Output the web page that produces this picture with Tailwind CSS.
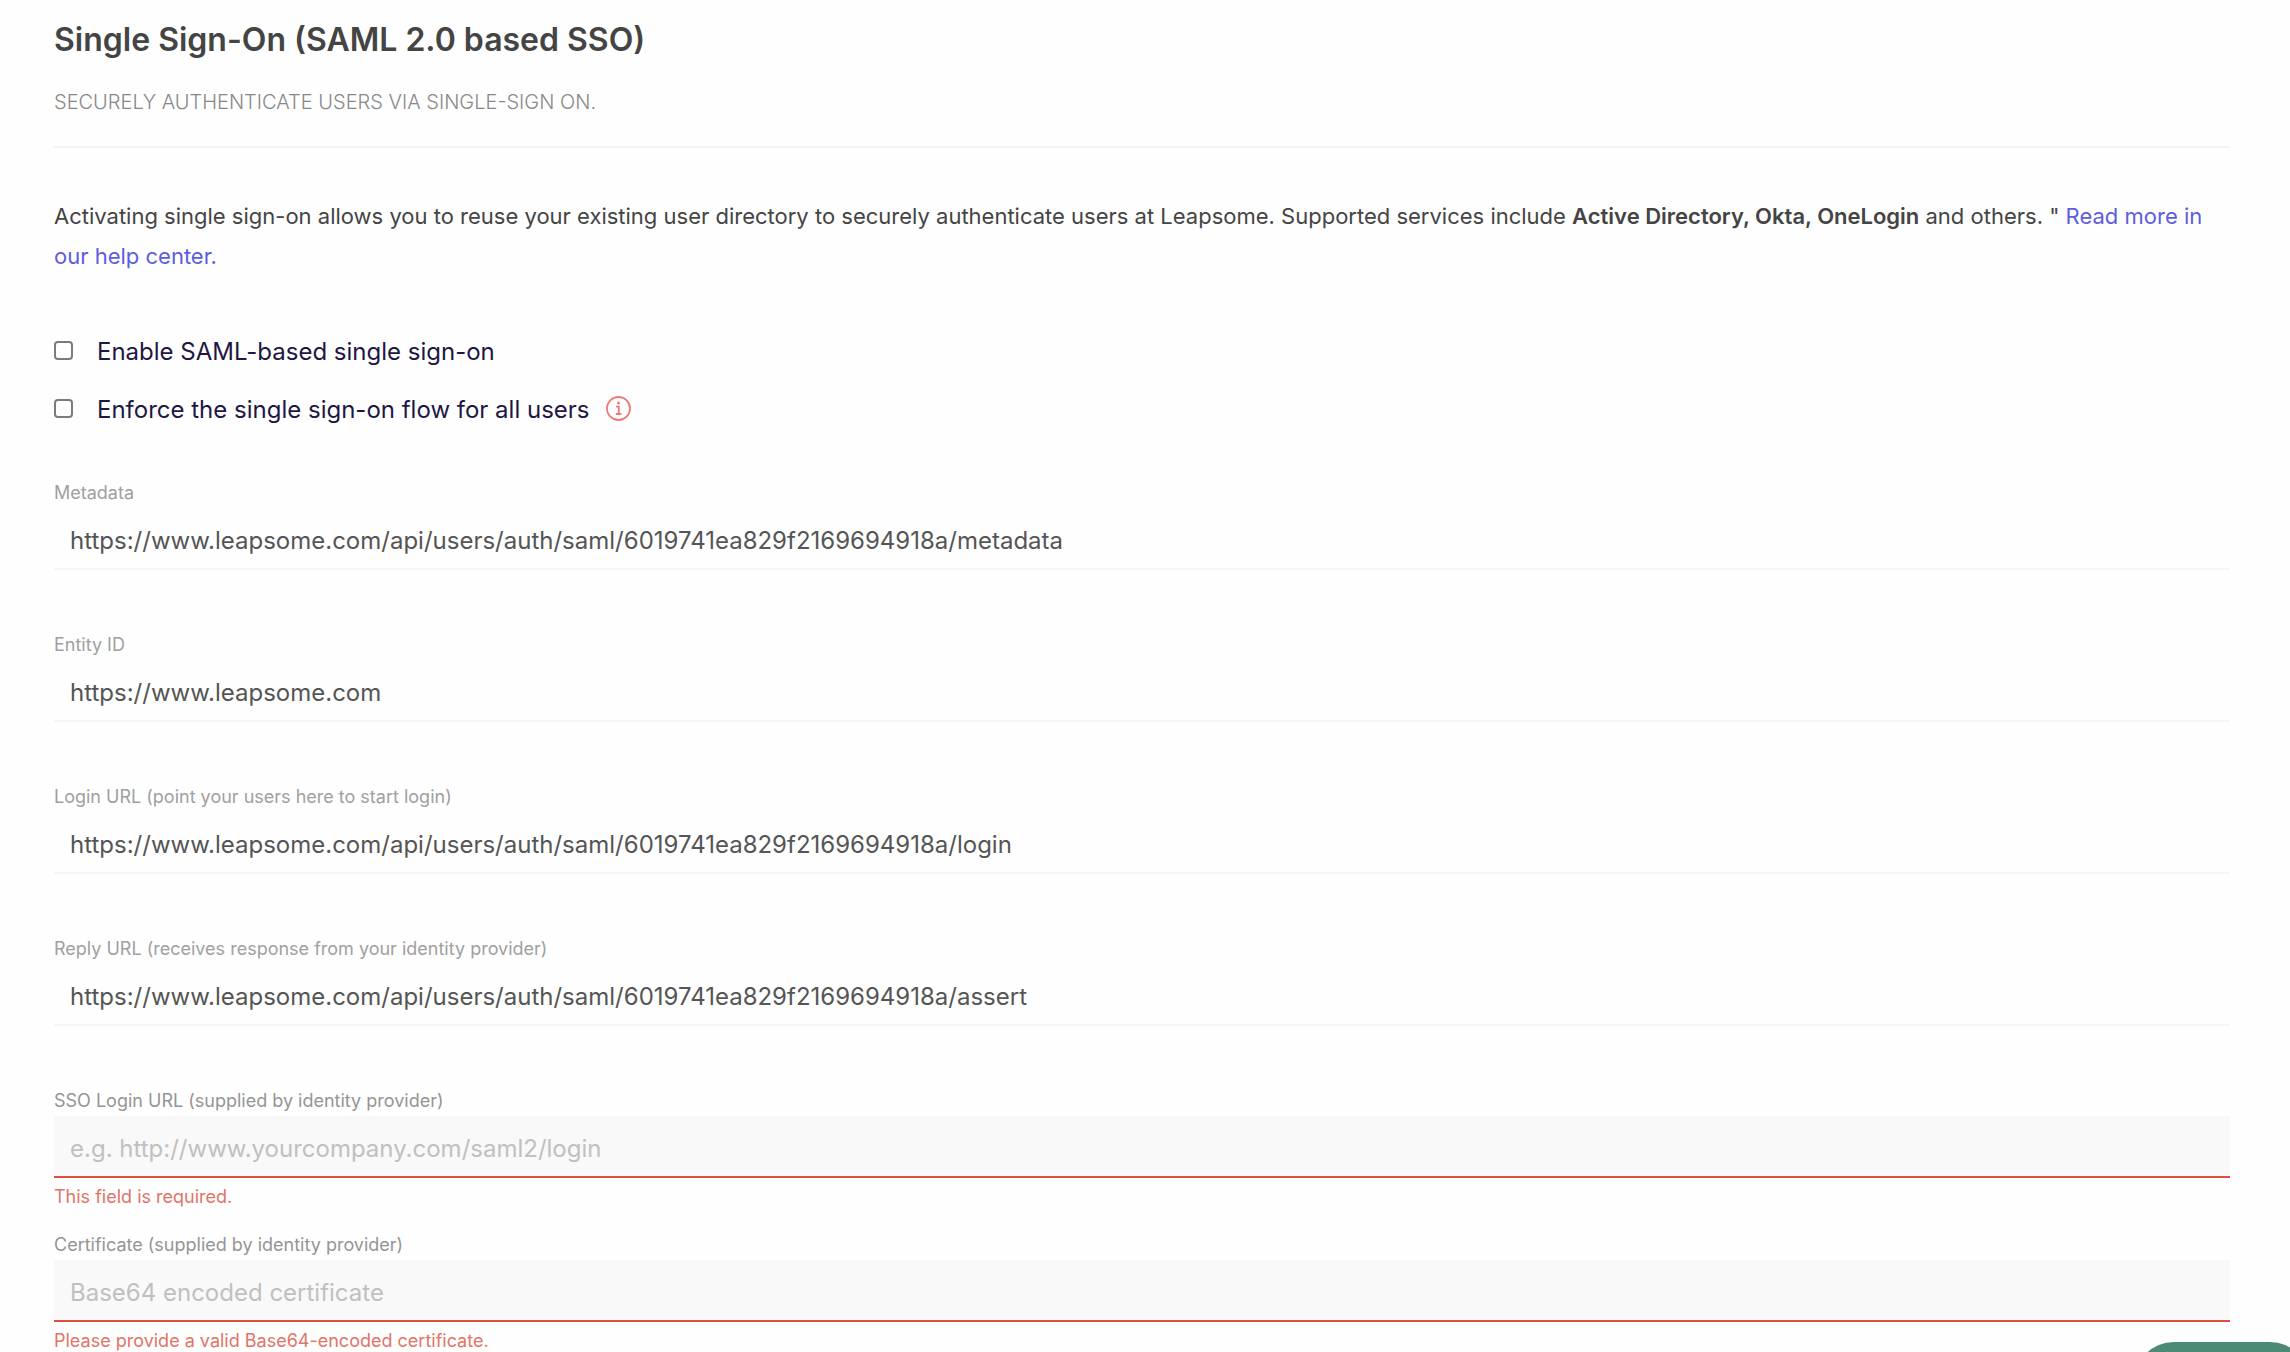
<!DOCTYPE html>
<html lang="en">
<head>
    <meta charset="UTF-8">
    <meta name="viewport" content="width=device-width, initial-scale=1.0">
    <script src="https://cdn.jsdelivr.net/npm/@tailwindcss/browser@4"></script>
    <title>Single Sign-On</title>
</head>
<body class="bg-[#fefefe] font-['Inter',sans-serif] text-[#444444]">
    <main class="pl-[54px] pr-[60px] pt-5">
        <header class="border-b-2 border-[#f3f3f3] pb-[30px]">
            <h1 class="text-[32px] leading-[40px] font-semibold">Single Sign-On (SAML 2.0 based SSO)</h1>
            <p class="mt-7 text-[20px] leading-[28px] font-light text-[#888888] uppercase">Securely authenticate users via single-sign on.</p>
        </header>

        <p class="mt-12 text-[22px] leading-[40px]">
            Activating single sign-on allows you to reuse your existing user directory to securely authenticate users at Leapsome. Supported services include <b class="font-semibold">Active Directory, Okta, OneLogin</b> and others. " <a href="#" class="text-[#5d5de0]">Read more in our help center.</a>
        </p>

        <form>
            <div class="mt-[58px] flex flex-col gap-[26px] text-[24px] leading-[28px] text-[#1e1743]">
                <div class="flex items-center">
                    <input type="checkbox" id="enable" class="size-[19px] appearance-none rounded-[4px] border-2 border-[#7b7b7b] bg-white checked:bg-[#5d5de0]">
                    <label for="enable" class="pl-6 pt-1">Enable SAML-based single sign-on</label>
                </div>
                <div class="flex items-center">
                    <input type="checkbox" id="enforce" class="size-[19px] appearance-none rounded-[4px] border-2 border-[#7b7b7b] bg-white checked:bg-[#5d5de0]">
                    <label for="enforce" class="pl-6 pt-1">Enforce the single sign-on flow for all users</label>
                    <svg class="ml-4 size-[25px]" viewBox="0 0 25 25" fill="none" stroke="#ec7b78">
                        <circle cx="12.5" cy="12.5" r="11.5" stroke-width="1.8"/>
                        <circle cx="12.5" cy="7" r="1.5" fill="#ec7b78" stroke="none"/>
                        <path d="M10 10.7h2.8v7.2M9.8 18h5.6" stroke-width="1.8"/>
                    </svg>
                </div>
            </div>

            <div class="mt-[50px] flex flex-col gap-14">
                <div>
                    <label for="metadata" class="block pt-1 text-[18px] leading-[30px] text-[#a0a0a0]">Metadata</label>
                    <input type="text" id="metadata" readonly value="https://www.leapsome.com/api/users/auth/saml/6019741ea829f2169694918a/metadata" class="block h-[62px] w-full border-b-2 border-[#f7f7f7] px-4 pt-1 text-[24px] text-[#555555]">
                </div>
                <div>
                    <label for="entity" class="block pt-1 text-[18px] leading-[30px] text-[#a0a0a0]">Entity ID</label>
                    <input type="text" id="entity" readonly value="https://www.leapsome.com" class="block h-[62px] w-full border-b-2 border-[#f7f7f7] px-4 pt-1 text-[24px] text-[#555555]">
                </div>
                <div>
                    <label for="login" class="block pt-1 text-[18px] leading-[30px] text-[#a0a0a0]">Login URL (point your users here to start login)</label>
                    <input type="text" id="login" readonly value="https://www.leapsome.com/api/users/auth/saml/6019741ea829f2169694918a/login" class="block h-[62px] w-full border-b-2 border-[#f7f7f7] px-4 pt-1 text-[24px] text-[#555555]">
                </div>
                <div>
                    <label for="reply" class="block pt-1 text-[18px] leading-[30px] text-[#a0a0a0]">Reply URL (receives response from your identity provider)</label>
                    <input type="text" id="reply" readonly value="https://www.leapsome.com/api/users/auth/saml/6019741ea829f2169694918a/assert" class="block h-[62px] w-full border-b-2 border-[#f7f7f7] px-4 pt-1 text-[24px] text-[#555555]">
                </div>
            </div>

            <div class="mt-14 flex flex-col gap-[14px]">
                <div>
                    <label for="sso" class="block pt-1 text-[18px] leading-[30px] text-[#959595]">SSO Login URL (supplied by identity provider)</label>
                    <input type="text" id="sso" placeholder="e.g. http://www.yourcompany.com/saml2/login" class="block h-[62px] w-full border-b-2 border-[#dd503c] bg-[#f9f9f9] px-4 pt-1 text-[24px] placeholder:text-[#c0c0c0]">
                    <p class="pt-1 text-[18px] leading-[30px] text-[#de7567]">This field is required.</p>
                </div>
                <div>
                    <label for="certificate" class="block pt-1 text-[18px] leading-[30px] text-[#959595]">Certificate (supplied by identity provider)</label>
                    <input type="text" id="certificate" placeholder="Base64 encoded certificate" class="block h-[62px] w-full border-b-2 border-[#dd503c] bg-[#f9f9f9] px-4 pt-1 text-[24px] placeholder:text-[#c0c0c0]">
                    <p class="pt-1 text-[18px] leading-[30px] text-[#de7567]">Please provide a valid Base64-encoded certificate.</p>
                </div>
            </div>
        </form>
    </main>

    <!-- floating help launcher, peeks in from the corner -->
    <button type="button" aria-label="Help" class="fixed -right-5 -bottom-[70px] h-20 w-[176px] rounded-full bg-[#4b8b76]"></button>
</body>
</html>
